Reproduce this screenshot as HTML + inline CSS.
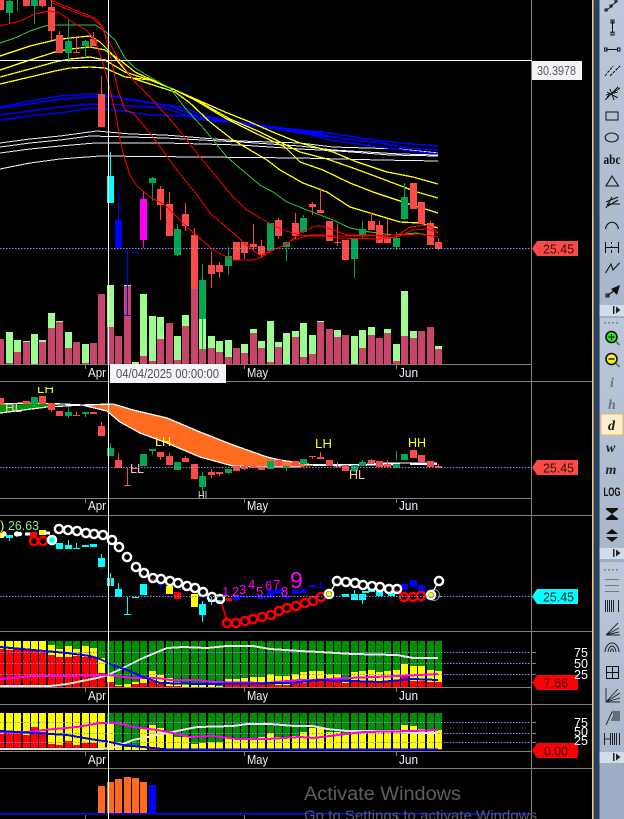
<!DOCTYPE html>
<html><head><meta charset="utf-8"><style>
html,body{margin:0;padding:0;background:#000;width:624px;height:819px;overflow:hidden}
svg{display:block;position:absolute;left:0;top:0}
text{font-family:"Liberation Sans",sans-serif}
.ax{fill:#eaf2ff;font-size:13px}
.tg{fill:#301010;font-size:13px}
.lb{fill:#fff;font-size:13px}
.ln{fill:none;shape-rendering:crispEdges}
.b{shape-rendering:crispEdges}
.ic{fill:none;stroke:#111;stroke-width:1;shape-rendering:crispEdges}
.c{fill:none;stroke-width:2.4}
</style></head><body>
<svg width="624" height="819" viewBox="0 0 624 819" xmlns="http://www.w3.org/2000/svg">
<defs><linearGradient id="tb" x1="0" y1="0" x2="0" y2="1"><stop offset="0" stop-color="#bcc8da"/><stop offset="1" stop-color="#a9b7cc"/></linearGradient></defs>
<rect width="624" height="819" fill="#000"/>

<!-- VOLUME -->
<path class="b" fill="#9cfc8c" d="M6 332h7V364h-7zM14 340h7V364h-7zM23 341h7V364h-7zM31 334h7V364h-7zM39 340h7V364h-7zM48 313h7V364h-7zM56 321h7V364h-7zM65 332h7V364h-7zM82 344h7V364h-7zM107 285h7V364h-7zM124 285h7V364h-7zM132 362h7V364h-7zM140 294h7V364h-7zM149 316h7V364h-7zM157 317h7V364h-7zM174 336h7V364h-7zM182 315h7V364h-7zM199 319h7V364h-7zM208 336h7V364h-7zM216 341h7V364h-7zM225 340h7V364h-7zM241 344h7V364h-7zM250 329h7V364h-7zM258 341h7V364h-7zM267 321h7V364h-7zM275 342h7V364h-7zM283 333h7V364h-7zM292 331h7V364h-7zM300 323h7V364h-7zM309 335h7V364h-7zM317 321h7V364h-7zM334 330h7V364h-7zM351 336h7V364h-7zM359 330h7V364h-7zM368 327h7V364h-7zM384 329h7V364h-7zM393 344h7V364h-7zM401 291h7V364h-7zM410 331h7V364h-7zM435 346h7V364h-7z"/>
<path class="b" fill="#c8456a" d="M-3 339h7V364h-7zM6 363h7V364h-7zM14 352h7V364h-7zM23 342h7V364h-7zM39 342h7V364h-7zM48 328h7V364h-7zM56 322h7V364h-7zM65 348h7V364h-7zM73 342h7V364h-7zM82 363h7V364h-7zM90 343h7V364h-7zM98 294h7V364h-7zM107 327h7V364h-7zM115 336h7V364h-7zM124 286h7V364h-7zM140 356h7V364h-7zM149 361h7V364h-7zM157 339h7V364h-7zM166 323h7V364h-7zM174 360h7V364h-7zM182 326h7V364h-7zM191 289h7V364h-7zM199 349h7V364h-7zM208 348h7V364h-7zM216 352h7V364h-7zM225 357h7V364h-7zM233 348h7V364h-7zM241 353h7V364h-7zM250 333h7V364h-7zM258 348h7V364h-7zM267 362h7V364h-7zM275 347h7V364h-7zM292 337h7V364h-7zM300 357h7V364h-7zM309 354h7V364h-7zM317 322h7V364h-7zM326 329h7V364h-7zM334 337h7V364h-7zM342 335h7V364h-7zM359 348h7V364h-7zM368 335h7V364h-7zM376 338h7V364h-7zM384 333h7V364h-7zM393 361h7V364h-7zM401 336h7V364h-7zM410 338h7V364h-7zM418 331h7V364h-7zM427 327h7V364h-7zM435 349h7V364h-7z"/>

<!-- WHITE MAS -->
<g class="ln" stroke="#eeeeff" stroke-width="1">
<path d="M0 143L30 139L60 136L97 131L130 134L165 135L240 141L300 143L333 147L367 148L400 149L438 153"/>
<path d="M0 147L30 143L60 140L90 136L130 137L165 138L240 142L300 146L333 150L367 152L400 154L438 155"/>
<path d="M0 153L30 149L60 146L95 143L165 143L240 145L300 149L338 151L390 155L438 156"/>
<path d="M0 169L30 163L60 159L100 156L300 158L380 160L438 161"/>
</g>
<!-- BLUE MAS -->
<g class="ln" stroke="#0000ff" stroke-width="1.5">
<path d="M0 107L30 101L60 96L90 94L110 95L130 100L170 106L200 117L240 124L300 130L323 132L367 139L400 143L438 146"/>
<path d="M0 108L30 104L60 99L93 97L110 96L140 101L180 107L210 117L250 125L300 131L340 138L380 143L410 148L438 150"/>
<path d="M0 115L30 111L60 107L90 104L110 104L130 106L165 108L185 115L240 122L300 132L330 140L380 147L410 151L438 154"/>
<path d="M0 120L30 116L60 113L90 108L115 110L150 115L185 116L205 120L240 123L300 133L340 138"/>
<path stroke-width="3" d="M245 124L300 131L323 134"/>
</g>
<!-- YELLOW MAS -->
<g class="ln" stroke="#ffff00" stroke-width="1.3">
<path d="M0 56L30 46L55 40L70 38L90 36L100 42L110 52L120 64L132 78L150 84L175 92L190 103L210 122L233 140L267 160L280 170L303 183L327 192L350 207L370 213L400 222L420 223L438 228"/>
<path d="M0 70L30 60L55 52L70 49L90 47L105 50L120 60L135 72L150 79L175 90L195 100L225 118L255 133L285 147L300 162L323 170L350 183L373 192L403 202L438 213"/>
<path d="M0 77L30 69L55 62L70 59L90 57L105 60L125 72L150 80L175 90L200 102L230 119L260 132L300 152L327 159L353 168L380 178L417 192L438 198"/>
<path d="M0 84L30 77L55 71L70 68L90 67L105 68L125 77L150 80L175 90L200 101L225 112L250 122L275 133L300 143L333 152L357 162L387 172L413 177L438 184"/>
</g>
<!-- GREEN MA -->
<path class="ln" stroke="#33c733" stroke-width="1" d="M0 43L15 38L30 31L45 26L52 25L95 25L105 31L115 40L125 58L135 68L155 80L170 88L185 108L205 130L227 157L242 170L260 185L273 192L287 202L307 210L333 220L350 228L370 232L393 235L417 233L438 237"/>

<!-- MAIN CANDLES wicks -->
<path class="b" fill="none" stroke="#00a651" d="M9.5 0V23M17.5 0V11M34.5 0V24M68.5 19V62M85.5 40V56M152.5 177V201M177.5 224V256M202.5 264V352M228.5 247V275M286.5 242V261M303.5 215V233M354.5 239V278M362.5 221V239M396.5 232V250M404.5 183V220"/>
<path class="b" fill="none" stroke="#ff4444" d="M42.5 0V7M51.5 0V40M59.5 31V35M76.5 36V52M93.5 32V39M101.5 76V94M160.5 186V220M169.5 192V204M185.5 203V231M194.5 228V235M211.5 251V288M219.5 262V278M244.5 242V259M253.5 224V250M261.5 240V258M278.5 218V239M295.5 213V239M312.5 202V215M320.5 188V213M337.5 224V246M345.5 240V260M371.5 213V221M379.5 221V225M387.5 219V243M430.5 221V245M438.5 238V250"/>
<path class="b" fill="none" stroke="#0000ff" d="M118.5 190V220M127.5 248V315M124 315.5H131"/>
<path class="b" fill="none" stroke="#00ffff" d="M110.5 152V176"/>
<path class="b" fill="none" stroke="#ff00ff" d="M143.5 192V248"/>
<path class="b" fill="none" stroke="#ff4444" d="M73 52.5H80"/>

<path class="b" fill="#00a651" d="M6 1h7v12h-7zM31 0h7v6h-7zM65 41h7v12h-7zM82 41h7v5h-7zM149 178h7v5h-7zM174 229h7v26h-7zM199 280h7v39h-7zM225 256h7v10h-7zM267 223h7v28h-7zM283 242h7v5h-7zM300 218h7v14h-7zM351 239h7v20h-7zM359 229h7v7h-7zM393 238h7v9h-7zM401 197h7v22h-7z"/>
<path class="b" fill="#fb4a47" d="M-3 0h7v10h-7zM23 0h7v6h-7zM39 0h7v6h-7zM48 7h7v24h-7zM56 35h7v18h-7zM90 39h7v7h-7zM98 94h7v33h-7zM157 189h7v16h-7zM166 204h7v32h-7zM182 214h7v12h-7zM191 235h7v54h-7zM208 265h7v9h-7zM216 265h7v7h-7zM233 242h7v18h-7zM241 242h7v11h-7zM250 244h7v3h-7zM258 246h7v9h-7zM275 220h7v16h-7zM292 223h7v13h-7zM309 204h7v3h-7zM317 210h7v3h-7zM326 221h7v20h-7zM334 242h7v1h-7zM342 240h7v20h-7zM368 221h7v9h-7zM376 225h7v18h-7zM384 237h7v6h-7zM410 183h7v26h-7zM418 202h7v22h-7zM427 223h7v22h-7zM435 242h7v7h-7z"/>
<path class="b" fill="#00ffff" d="M107 176h7v27h-7z"/>
<path class="b" fill="#0000ff" d="M115 220h7v28h-7zM132 252h7v1h-7z"/>
<path class="b" fill="#ff00ff" d="M140 199h7v41h-7z"/>

<!-- RED MAS -->
<g fill="none" stroke="#ff0000" stroke-width="1" shape-rendering="crispEdges">
<path d="M0 26L20 21L35 14L50 11L60 13L75 24L85 29L95 40L103 63L110 90L116 115L120 140L125 160L130 175L136 185L150 197L165 205L187 227L213 250L233 260L253 260L260 258L273 250L287 244L300 233L315 226L323 226L333 230L347 235L373 235L393 238L410 227L427 225L438 232"/>
<path d="M52 3L70 10L85 16L95 18L103 27L110 55L118 90L125 110L133 113L150 133L177 170L197 195L210 213L233 233L255 252L260 255L280 247L293 240L310 235L323 235L337 238L380 239L397 237L413 230L427 229L438 233"/>
<path d="M50 0L70 8L90 16L100 25L120 62L135 82L150 97L175 125L200 157L233 197L247 210L267 222L283 230L300 235L310 236L360 236L400 235L420 234L438 237"/>
</g>

<!-- PANE 2 CLOUDS -->
<path class="b" fill="#ff6c1f" d="M82 405L113 404L133 410L167 418L200 432L233 445L267 457L300 463L313 466L300 467L233 466L200 457L167 443L140 433L120 422L107 411Z"/>
<path class="b" fill="#009a00" d="M0 405L30 404L63 404L47 407L0 413Z"/>
<g class="ln" stroke="#fff" stroke-width="1.3">
<path d="M0 404L30 403L63 404L82 405L113 404L133 410L167 418L200 432L233 445L267 457L280 460L300 463L313 465L367 465L380 463L410 463L437 463"/>
<path d="M0 413L47 407L82 405L107 411L120 422L140 433L167 443L200 457L233 466L260 467L300 467"/>
<path stroke-width="2" d="M313 465H367M367 464.5H400M410 464H437"/>
</g>

<!-- PANE 2 CANDLES -->
<path class="b" fill="none" stroke="#00a651" d="M34.5 397V407M68.5 407V418M85.5 414V417M110.5 443V456M152.5 449V455M202.5 472V494M228.5 469V474M286.5 466V471M362.5 460V466M396.5 451V460M354.5 465V472"/>
<path class="b" fill="none" stroke="#fb4a47" d="M51.5 403V412M76.5 412V416M101.5 422V426M118.5 453V460M127.5 468V485M124 485.5H131M132 468.5H139M160.5 452V460M169.5 453V456M185.5 456V458M211.5 469V478M219.5 472V476M244.5 466V470M253.5 462V466M312.5 457V459M320.5 452V458M337.5 462V467M371.5 459V460M387.5 460V464M438.5 464V466"/>
<path class="b" fill="#00a651" d="M31 397h7v7h-7zM65 412h7v4h-7zM82 412h7v2h-7zM107 448h7v8h-7zM140 454h7v12h-7zM149 449h7v2h-7zM174 462h7v8h-7zM199 476h7v11h-7zM225 469h7v4h-7zM267 461h7v8h-7zM283 466h7v2h-7zM300 459h7v5h-7zM351 465h7v6h-7zM359 462h7v4h-7zM393 464h7v4h-7zM401 454h7v6h-7z"/>
<path class="b" fill="#fb4a47" d="M-3 398h7v7h-7zM23 401h7v3h-7zM39 396h7v8h-7zM48 403h7v7h-7zM56 411h7v5h-7zM73 415h7v1h-7zM90 412h7v2h-7zM98 426h7v10h-7zM115 460h7v8h-7zM157 452h7v5h-7zM166 456h7v9h-7zM182 458h7v4h-7zM191 464h7v15h-7zM208 472h7v3h-7zM216 472h7v2h-7zM233 466h7v5h-7zM241 466h7v3h-7zM250 466h7v2h-7zM258 467h7v3h-7zM275 460h7v6h-7zM292 461h7v5h-7zM309 456h7v1h-7zM317 457h7v2h-7zM326 460h7v6h-7zM334 466h7v1h-7zM342 465h7v6h-7zM368 460h7v3h-7zM376 461h7v6h-7zM384 464h7v3h-7zM410 450h7v8h-7zM418 455h7v7h-7zM427 461h7v6h-7zM435 466h7v2h-7z"/>
<rect class="b" x="108" y="405" width="1" height="11" fill="#2f8fd0"/>
<clipPath id="p2"><rect x="0" y="387" width="531" height="111"/></clipPath>
<g clip-path="url(#p2)" font-size="13">
<text x="37" y="393" fill="#ffff00" textLength="17" lengthAdjust="spacingAndGlyphs" style="font-size:13px">LH</text>
<text x="5" y="412" fill="#f0c8d0" textLength="17" lengthAdjust="spacingAndGlyphs" style="font-size:13px">HL</text>
<text x="155" y="446" fill="#ffff00" textLength="16" lengthAdjust="spacingAndGlyphs" style="font-size:13px">LH</text>
<text x="130" y="473" fill="#ffc0c8" textLength="14" lengthAdjust="spacingAndGlyphs" style="font-size:13px">LL</text>
<text x="198" y="500" fill="#f0c8d0" textLength="12" lengthAdjust="spacingAndGlyphs" style="font-size:13px">HL</text>
<text x="315" y="448" fill="#ffff00" textLength="17" lengthAdjust="spacingAndGlyphs" style="font-size:13px">LH</text>
<text x="349" y="479" fill="#f0c8d0" textLength="16" lengthAdjust="spacingAndGlyphs" style="font-size:13px">HL</text>
<text x="408" y="447" fill="#ffff00" textLength="18" lengthAdjust="spacingAndGlyphs" style="font-size:13px">HH</text>
</g>

<!-- PANE 3 -->
<path class="b" fill="none" stroke="#00ffff" d="M9.5 535V541M68.5 540V549M76.5 543V549M73 548.5H80M101.5 554V558M110.5 573V586M118.5 583V589M127.5 597V614M124 614.5H131M132 597.5H139M202.5 601V622M211.5 597V605M354.5 590V596M362.5 600V604"/>
<path class="b" fill="none" stroke="#0000ff" d="M160.5 582V588M253.5 592V596M286.5 596V600M320.5 582V587M404.5 581V584M190 598H194"/>
<path class="b" fill="#00ffff" d="M6 535h7v3h-7zM56 543h7v6h-7zM65 545h7v4h-7zM82 545h7v2h-7zM90 544h7v3h-7zM98 558h7v9h-7zM107 578h7v8h-7zM115 589h7v8h-7zM140 584h7v11h-7zM199 604h7v11h-7zM208 600h7v2h-7zM216 600h7v2h-7zM342 594h7v3h-7zM351 594h7v6h-7zM359 594h7v6h-7zM362 591h7v2h-7zM368 590h7v2h-7zM376 591h7v5h-7zM388 593h7v3h-7zM439 596h3v1h-3z"/>
<path class="b" fill="#0000ff" d="M157 582h7v3h-7zM182 588h7v2h-7zM233 596h7v4h-7zM241 596h7v2h-7zM250 596h7v1h-7zM258 596h7v3h-7zM267 590h7v8h-7zM275 589h7v5h-7zM283 596h7v2h-7zM292 590h7v4h-7zM300 589h7v4h-7zM309 585h7v2h-7zM317 587h7v1h-7zM401 584h7v6h-7zM410 580h7v7h-7zM418 585h7v7h-7zM149 579h7v1h-7z"/>
<path class="b" fill="#ffff00" d="M-3 533h7v5h-7zM39 530h7v5h-7zM166 586h7v8h-7zM191 594h7v13h-7z"/>
<path class="b" fill="#ff0000" d="M30 532h7v5h-7zM174 592h7v7h-7zM226 598h6v3h-6zM110 578h1v8h-1zM150 579h5v1h-5z"/>
<g class="c" stroke="#ff0000" fill="none">
<circle cx="34" cy="541" r="4.1"/><circle cx="43" cy="541" r="4.1"/>
<circle cx="227" cy="623" r="4.1"/><circle cx="236" cy="623" r="4.1"/><circle cx="245" cy="621" r="4.1"/><circle cx="253" cy="619" r="4.1"/><circle cx="262" cy="617" r="4.1"/><circle cx="271" cy="615" r="4.1"/><circle cx="279" cy="611" r="4.1"/><circle cx="287" cy="608" r="4.1"/><circle cx="296" cy="606" r="4.1"/><circle cx="305" cy="603" r="4.1"/><circle cx="313" cy="601" r="4.1"/><circle cx="321" cy="597" r="4.1"/>
<circle cx="404" cy="597" r="4.1"/><circle cx="413" cy="597" r="4.1"/><circle cx="421" cy="596" r="4.1"/>
<path stroke-width="1.5" d="M221 600L227 622M396 590L404 597"/>
</g>
<circle cx="52" cy="540" r="3.2" fill="#00ffff"/>
<circle cx="329" cy="594" r="2.5" fill="#ffff00"/><circle cx="431" cy="595" r="2.5" fill="#ffff00"/>
<circle cx="434" cy="595" r="5.5" fill="none" stroke="#7fd07f" stroke-width="0.8"/>
<g class="c" stroke="#fff" fill="none">
<circle cx="4" cy="534" r="1.5"/><circle cx="17" cy="534" r="1.5"/><circle cx="20" cy="534" r="1"/>
<circle cx="52" cy="540" r="4.1"/>
<path stroke-width="3" d="M14 534H18M25 534H30M44 533H50"/>
<circle cx="59" cy="529" r="4.1"/><circle cx="68" cy="530" r="4.1"/><circle cx="77" cy="531" r="4.1"/><circle cx="86" cy="533" r="4.1"/><circle cx="94" cy="534" r="4.1"/><circle cx="103" cy="535" r="4.1"/><circle cx="112" cy="540" r="4.1"/><circle cx="119" cy="547" r="4.1"/><circle cx="127" cy="557" r="4.1"/><circle cx="136" cy="567" r="4.1"/><circle cx="144" cy="573" r="4.1"/><circle cx="153" cy="578" r="4.1"/><circle cx="161" cy="579" r="4.1"/><circle cx="170" cy="581" r="4.1"/><circle cx="178" cy="583" r="4.1"/><circle cx="187" cy="586" r="4.1"/><circle cx="195" cy="588" r="4.1"/><circle cx="203" cy="592" r="4.1"/><circle cx="212" cy="597" r="4.1"/><circle cx="220" cy="599" r="4.1"/>
<circle cx="329" cy="594" r="4.1"/><circle cx="337" cy="581" r="4.1"/><circle cx="346" cy="582" r="4.1"/><circle cx="355" cy="583" r="4.1"/><circle cx="363" cy="585" r="4.1"/><circle cx="372" cy="586" r="4.1"/><circle cx="380" cy="587" r="4.1"/><circle cx="389" cy="589" r="4.1"/><circle cx="397" cy="589" r="4.1"/>
<circle cx="431" cy="595" r="4.1"/><circle cx="439" cy="581" r="4.1"/>
<path stroke-width="1.3" d="M331 591L335 584M433 592L437 584"/>
</g>
<text x="0" y="530" style="font-size:13px" fill="#ffff00">)</text>
<text x="8" y="530" style="font-size:13px" fill="#90ee80" textLength="31" lengthAdjust="spacingAndGlyphs">26.63</text>
<g fill="#ff00ff" style="font-size:13px">
<text x="222" y="596" style="font-size:13px">1</text><text x="232" y="596" style="font-size:13px">2</text><text x="239" y="594" style="font-size:13px">3</text><text x="248" y="589" style="font-size:13px">4</text><text x="256" y="596" style="font-size:13px">5</text><text x="265" y="590" style="font-size:13px">6</text><text x="273" y="589" style="font-size:13px">7</text><text x="281" y="596" style="font-size:13px">8</text>
<text x="290" y="588" style="font-size:23px">9</text>
</g>

<!-- PANE 4 -->
<path id="g4" class="b" fill="#008f00" d="M0 641h4V687H0zM6 641h7V687h-7zM14 641h7V687h-7zM23 641h7V687h-7zM31 641h7V687h-7zM39 641h7V687h-7zM48 641h7V687h-7zM56 641h7V687h-7zM65 641h7V687h-7zM73 641h7V687h-7zM82 641h7V687h-7zM90 641h7V687h-7zM98 641h7V687h-7zM107 641h7V687h-7zM115 641h7V687h-7zM124 641h7V687h-7zM132 641h7V687h-7zM140 641h7V687h-7zM149 641h7V687h-7zM157 641h7V687h-7zM166 641h7V687h-7zM174 641h7V687h-7zM182 641h7V687h-7zM191 641h7V687h-7zM199 641h7V687h-7zM208 641h7V687h-7zM216 641h7V687h-7zM225 641h7V687h-7zM233 641h7V687h-7zM241 641h7V687h-7zM250 641h7V687h-7zM258 641h7V687h-7zM267 641h7V687h-7zM275 641h7V687h-7zM283 641h7V687h-7zM292 641h7V687h-7zM300 641h7V687h-7zM309 641h7V687h-7zM317 641h7V687h-7zM326 641h7V687h-7zM334 641h7V687h-7zM342 641h7V687h-7zM351 641h7V687h-7zM359 641h7V687h-7zM368 641h7V687h-7zM376 641h7V687h-7zM384 641h7V687h-7zM393 641h7V687h-7zM401 641h7V687h-7zM410 641h7V687h-7zM418 641h7V687h-7zM427 641h7V687h-7zM435 641h7V687h-7z"/>
<path class="b" fill="#ffff00" d="M0 641h4V687H0zM6 641h7V687h-7zM14 641h7V687h-7zM23 641h7V687h-7zM31 641h7V687h-7zM39 641h7V687h-7zM48 645h7V687h-7zM56 649h7V687h-7zM65 646h7V687h-7zM73 649h7V687h-7zM82 646h7V687h-7zM90 648h7V687h-7zM98 658h7V687h-7zM107 675h7V687h-7zM115 685h7V687h-7zM124 684h7V687h-7zM132 682h7V687h-7zM140 679h7V687h-7zM149 671h7V687h-7zM157 675h7V687h-7zM166 678h7V687h-7zM174 682h7V687h-7zM182 683h7V687h-7zM191 684h7V687h-7zM199 685h7V687h-7zM208 685h7V687h-7zM216 686h7V687h-7zM225 679h7V687h-7zM233 679h7V687h-7zM241 678h7V687h-7zM250 677h7V687h-7zM258 677h7V687h-7zM267 674h7V687h-7zM275 676h7V687h-7zM283 676h7V687h-7zM292 674h7V687h-7zM300 672h7V687h-7zM309 671h7V687h-7zM317 671h7V687h-7zM326 674h7V687h-7zM334 674h7V687h-7zM342 682h7V687h-7zM351 672h7V687h-7zM359 671h7V687h-7zM368 670h7V687h-7zM376 672h7V687h-7zM384 671h7V687h-7zM393 670h7V687h-7zM401 664h7V687h-7zM410 666h7V687h-7zM418 666h7V687h-7zM427 670h7V687h-7zM435 671h7V687h-7z"/>
<path class="b" fill="#ff0000" d="M0 649h4V687H0zM6 650h7V687h-7zM14 649h7V687h-7zM23 649h7V687h-7zM31 651h7V687h-7zM39 652h7V687h-7zM48 655h7V687h-7zM56 657h7V687h-7zM65 657h7V687h-7zM73 656h7V687h-7zM82 657h7V687h-7zM90 657h7V687h-7zM98 673h7V687h-7zM107 682h7V687h-7zM115 686h7V687h-7zM132 684h7V687h-7zM140 683h7V687h-7zM149 681h7V687h-7zM157 684h7V687h-7zM166 686h7V687h-7zM174 686h7V687h-7zM225 683h7V687h-7zM233 683h7V687h-7zM241 684h7V687h-7zM250 684h7V687h-7zM258 683h7V687h-7zM267 684h7V687h-7zM275 685h7V687h-7zM283 685h7V687h-7zM292 683h7V687h-7zM300 683h7V687h-7zM309 681h7V687h-7zM317 681h7V687h-7zM326 681h7V687h-7zM334 681h7V687h-7zM342 683h7V687h-7zM351 681h7V687h-7zM359 681h7V687h-7zM368 681h7V687h-7zM376 681h7V687h-7zM384 681h7V687h-7zM393 681h7V687h-7zM401 675h7V687h-7zM410 681h7V687h-7zM418 681h7V687h-7zM427 682h7V687h-7zM435 682h7V687h-7z"/>
<path stroke="#8a8aff" stroke-width="1" stroke-dasharray="1.5 1.5" fill="none" class="b" d="M0 652.5H531M0 663.5H531M0 674.5H531"/>
<path stroke="#808080" class="b" fill="none" d="M531 652.5H536M531 663.5H536M531 674.5H536"/>
<g class="ln" stroke-width="2">
<path stroke="#e8e8e8" d="M0 686L50 686L67 684L97 678L108 675L123 668L143 658L167 648L183 647L207 648L227 646L253 646L270 649L300 651L320 652L353 654L397 655L413 658L438 658"/>
<path stroke="#ff00ff" d="M0 679L33 676L67 676L108 675L133 678L157 678L170 680L197 680L213 682L267 683L287 681L300 680L313 680L347 678L400 676L438 674"/>
<path stroke="#0000ff" d="M0 647L33 650L67 653L90 656L100 659L112 665L127 670L143 677L160 683L200 684L287 683L300 682L320 680L353 681L380 682L413 679L438 680"/>
</g>

<!-- PANE 5 -->
<use href="#g4" transform="translate(0,713) scale(1,0.8043) translate(0,-641)"/>
<path class="b" fill="#ffff00" d="M0 713h4V750H0zM6 713h7V750h-7zM14 713h7V750h-7zM23 713h7V750h-7zM31 713h7V750h-7zM39 713h7V750h-7zM48 713h7V750h-7zM56 713h7V750h-7zM65 713h7V750h-7zM73 713h7V750h-7zM82 713h7V750h-7zM90 713h7V750h-7zM98 713h7V750h-7zM107 724h7V750h-7zM115 742h7V750h-7zM124 747h7V750h-7zM132 747h7V750h-7zM140 728h7V750h-7zM149 725h7V750h-7zM157 728h7V750h-7zM166 732h7V750h-7zM174 737h7V750h-7zM182 737h7V750h-7zM191 744h7V750h-7zM199 743h7V750h-7zM208 742h7V750h-7zM216 742h7V750h-7zM225 738h7V750h-7zM233 738h7V750h-7zM241 738h7V750h-7zM250 738h7V750h-7zM258 737h7V750h-7zM267 733h7V750h-7zM275 737h7V750h-7zM283 737h7V750h-7zM292 736h7V750h-7zM300 732h7V750h-7zM309 728h7V750h-7zM317 727h7V750h-7zM326 732h7V750h-7zM334 732h7V750h-7zM342 733h7V750h-7zM351 731h7V750h-7zM359 733h7V750h-7zM368 732h7V750h-7zM376 732h7V750h-7zM384 732h7V750h-7zM393 730h7V750h-7zM401 725h7V750h-7zM410 726h7V750h-7zM418 729h7V750h-7zM427 730h7V750h-7zM435 730h7V750h-7z"/>
<path class="b" fill="#ff0000" d="M0 734h4V750H0zM6 733h7V750h-7zM14 733h7V750h-7zM23 735h7V750h-7zM31 727h7V750h-7zM39 732h7V750h-7zM48 744h7V750h-7zM56 745h7V750h-7zM65 741h7V750h-7zM73 745h7V750h-7zM82 743h7V750h-7zM90 743h7V750h-7zM98 749h7V750h-7zM149 749h7V750h-7zM157 749h7V750h-7zM435 749h7V750h-7z"/>
<path stroke="#8a8aff" stroke-width="1" stroke-dasharray="1.5 1.5" fill="none" class="b" d="M0 722.5H531M0 733.5H531M0 742.5H531"/>
<path stroke="#808080" class="b" fill="none" d="M531 722.5H536M531 733.5H536M531 742.5H536"/>
<g class="ln" stroke-width="2">
<path stroke="#e8e8e8" d="M0 749L100 749L113 748L133 740L167 733L197 727L233 726L247 724L270 724L295 726L313 726L327 729L347 731L397 731L413 733L438 733"/>
<path stroke="#ff00ff" d="M0 732L33 732L43 730L77 727L100 723L117 723L133 727L157 730L173 733L190 737L213 736L237 739L267 739L300 737L313 738L363 732L413 731L438 730"/>
<path stroke="#0000ff" d="M0 731L33 733L67 735L90 739L110 742L123 745L143 747L167 749.5L438 749.5"/>
</g>

<!-- PANE 6 -->
<path class="b" fill="#ff6a20" d="M98 786h7v27h-7zM107 782h7v31h-7zM115 779h7v34h-7zM124 777h7v36h-7zM132 778h7v35h-7zM140 782h7v31h-7z"/>
<rect class="b" x="149" y="785" width="7" height="28" fill="#0000ff"/>
<rect class="b" x="0" y="813" width="531" height="1.5" fill="#0a0aff"/>

<!-- DOTTED PRICE LINES -->
<path stroke="#8a8aff" stroke-width="1" stroke-dasharray="1.5 1.5" fill="none" class="b" d="M0 248.5H531M0 467.5H531M0 596.5H531"/>

<!-- SEPARATORS -->
<g class="b" fill="#808080">
<rect x="0" y="364" width="531" height="1"/><rect x="0" y="381" width="592" height="1"/>
<rect x="0" y="498" width="531" height="1"/><rect x="0" y="515" width="592" height="1"/>
<rect x="0" y="631" width="592" height="1"/><rect x="0" y="687" width="531" height="1"/>
<rect x="0" y="704" width="592" height="1"/><rect x="0" y="751" width="531" height="1"/>
<rect x="0" y="768" width="592" height="1"/><rect x="531" y="0" width="1" height="819"/>
<path d="M85 364h1v5h-1zM244 364h1v5h-1zM396 364h1v5h-1zM85 498h1v5h-1zM244 498h1v5h-1zM396 498h1v5h-1zM85 687h1v5h-1zM244 687h1v5h-1zM396 687h1v5h-1zM85 751h1v5h-1zM244 751h1v5h-1zM396 751h1v5h-1zM85 815h1v4h-1zM244 815h1v4h-1zM396 815h1v4h-1z"/>
</g>

<!-- DATE LABELS -->
<text class="ax" x="88" y="377" textLength="18" lengthAdjust="spacingAndGlyphs">Apr</text><text class="ax" x="247" y="377" textLength="21" lengthAdjust="spacingAndGlyphs">May</text><text class="ax" x="399" y="377" textLength="19" lengthAdjust="spacingAndGlyphs">Jun</text>
<text class="ax" x="88" y="510" textLength="18" lengthAdjust="spacingAndGlyphs">Apr</text><text class="ax" x="247" y="510" textLength="21" lengthAdjust="spacingAndGlyphs">May</text><text class="ax" x="399" y="510" textLength="19" lengthAdjust="spacingAndGlyphs">Jun</text>
<text class="ax" x="88" y="700" textLength="18" lengthAdjust="spacingAndGlyphs">Apr</text><text class="ax" x="247" y="700" textLength="21" lengthAdjust="spacingAndGlyphs">May</text><text class="ax" x="399" y="700" textLength="19" lengthAdjust="spacingAndGlyphs">Jun</text>
<text class="ax" x="88" y="764" textLength="18" lengthAdjust="spacingAndGlyphs">Apr</text><text class="ax" x="247" y="764" textLength="21" lengthAdjust="spacingAndGlyphs">May</text><text class="ax" x="399" y="764" textLength="19" lengthAdjust="spacingAndGlyphs">Jun</text>
<text class="ax" x="88" y="828" textLength="18" lengthAdjust="spacingAndGlyphs">Apr</text><text class="ax" x="247" y="828" textLength="21" lengthAdjust="spacingAndGlyphs">May</text>

<!-- CROSSHAIR -->
<rect class="b" x="108" y="0" width="1" height="819" fill="#fff"/>
<rect class="b" x="0" y="60" width="532" height="1" fill="#fff"/>

<!-- TOOLTIPS -->
<rect x="532" y="61" width="50" height="19" fill="#f4f4f4"/>
<text x="537" y="75" style="font-size:12.5px" fill="#555c70" textLength="39" lengthAdjust="spacingAndGlyphs">30.3978</text>
<rect x="110" y="364" width="116" height="19" fill="#f6f6f6"/>
<text x="116" y="378" style="font-size:12.5px" fill="#4a4f60" textLength="103" lengthAdjust="spacingAndGlyphs">04/04/2025 00:00:00</text>

<!-- TAGS -->
<path fill="#fb4a47" d="M532 248.5L537 241H578V256H537Z"/><text class="tg" x="543" y="253.5" textLength="31" lengthAdjust="spacingAndGlyphs">25.45</text>
<path fill="#fb4a47" d="M532 467.5L537 460H578V475H537Z"/><text class="tg" x="543" y="472.5" textLength="31" lengthAdjust="spacingAndGlyphs">25.45</text>
<path fill="#00ffff" d="M532 596.5L537 589H578V604H537Z"/><text class="tg" x="543" y="601.5" style="fill:#102030" textLength="31" lengthAdjust="spacingAndGlyphs">25.45</text>
<path fill="#ff0000" d="M532 682.5L537 675H578V690H537Z"/><text class="tg" x="544" y="687.5" textLength="24" lengthAdjust="spacingAndGlyphs">7.66</text>
<path fill="#ff0000" d="M532 750.5L537 743H578V758H537Z"/><text class="tg" x="544" y="755.5" textLength="24" lengthAdjust="spacingAndGlyphs">0.00</text>

<!-- RIGHT SCALE LABELS -->
<text class="lb" x="574" y="657" textLength="14" lengthAdjust="spacingAndGlyphs">75</text><text class="lb" x="574" y="668" textLength="14" lengthAdjust="spacingAndGlyphs">50</text><text class="lb" x="574" y="679" textLength="14" lengthAdjust="spacingAndGlyphs">25</text>
<text class="lb" x="574" y="727" textLength="14" lengthAdjust="spacingAndGlyphs">75</text><text class="lb" x="574" y="736" textLength="14" lengthAdjust="spacingAndGlyphs">50</text><text class="lb" x="574" y="745" textLength="14" lengthAdjust="spacingAndGlyphs">25</text>

<!-- ACTIVATE WINDOWS -->
<text x="304" y="800" fill="#5e5e5e" style="font-size:19px" textLength="157" lengthAdjust="spacingAndGlyphs">Activate Windows</text>
<text x="304" y="820" fill="#5e5e5e" style="font-size:14px" textLength="233" lengthAdjust="spacingAndGlyphs">Go to Settings to activate Windows</text>

<!-- TOOLBAR -->
<rect x="592" y="0" width="1.5" height="819" fill="#f4cf7a"/>
<rect x="593.5" y="0" width="6" height="819" fill="#2b3f61"/>
<rect x="599.5" y="0" width="24.5" height="819" fill="#9dadc5"/>
<rect x="599.5" y="0" width="24.5" height="305" fill="url(#tb)"/>
<rect x="599.5" y="305" width="24.5" height="11" fill="#d3dcea"/>
<rect x="600" y="318" width="24" height="230" rx="2" fill="url(#tb)"/>
<rect x="599.5" y="548" width="24.5" height="11" fill="#d3dcea"/>
<rect x="600" y="562" width="24" height="190" rx="2" fill="url(#tb)"/>
<rect x="599.5" y="752" width="24.5" height="11" fill="#d3dcea"/>
<rect x="601" y="414" width="22" height="21" fill="#ffeecb" stroke="#e6b765"/>
<path fill="#222" d="M616 306.5v7l4.5-3.5zM613 306h1.5v8h-1.5zM616 549.5v7l4.5-3.5zM613 549h1.5v8h-1.5zM616 753.5v7l4.5-3.5zM613 753h1.5v8h-1.5z"/>
<path stroke="#7a8698" stroke-dasharray="2 2" stroke-width="1.5" fill="none" class="b" d="M604 322.5H619M604 569.5H619"/>

<!-- toolbar icons set 1 -->
<g class="ic">
<path d="M606 11L617 1"/><rect x="605" y="9" width="2" height="2"/><rect x="610" y="5" width="2" height="2"/><rect x="615" y="0" width="2" height="2"/>
<path d="M612.5 21V33"/><rect x="611" y="20" width="3" height="3"/><rect x="611" y="32" width="3" height="3"/>
<path d="M606 49.5H618"/><rect x="604.5" y="48" width="2.5" height="3"/><rect x="617.5" y="48" width="2.5" height="3"/>
<path d="M605 76L613 66M610 76L620 66" stroke-dasharray="3 1"/>
<path d="M605 100L618 87M607 97L620 88M607 92L618 98M610 89L614 100M606 95L618 92"/>
<rect x="606" y="112" width="12" height="8" stroke-width="1.2"/>
</g>
<ellipse cx="611.7" cy="137.5" rx="6.5" ry="4.5" fill="none" stroke="#111" stroke-width="1.1"/>
<text x="603.5" y="164" style="font-family:'Liberation Serif',serif;font-weight:bold;font-size:13.5px" fill="#111" textLength="17" lengthAdjust="spacingAndGlyphs">abc</text>
<g fill="none" stroke="#111" stroke-width="1.1">
<path d="M612 176L618.5 186H606Z"/>
<path d="M606 202L618 197M607 204H620M606 208L612 197M608 206L618 200"/>
<path d="M605.5 229C607 220 617 220 618.5 229"/>
</g>
<path class="ic" d="M605.5 242V253M618.5 242V253M611.5 242V244M611.5 246V248M611.5 250V253M606 247.5H618"/>
<path d="M605.5 273L611 264L613 270L619.5 263" fill="none" stroke="#111" stroke-width="1.1"/>
<path d="M607 296L615 290" fill="none" stroke="#111" stroke-width="1.1"/><rect x="606" y="294" width="3" height="3" fill="none" stroke="#111"/>
<path d="M620 285L617 295L611 289Z" fill="#111"/>
<circle cx="611.5" cy="337" r="5.5" fill="#22ee22" stroke="#111" stroke-width="1.6"/>
<path d="M608.5 337H614.5M611.5 334V340" stroke="#111" stroke-width="1.2" fill="none"/>
<path d="M616 341.5L619.5 345" stroke="#666" stroke-width="1.6" fill="none"/>
<circle cx="611.5" cy="359" r="5.5" fill="#f4ee22" stroke="#111" stroke-width="1.6"/>
<path d="M608.5 359H614.5" stroke="#111" stroke-width="1.4" fill="none"/>
<path d="M616 363.5L619.5 367" stroke="#666" stroke-width="1.6" fill="none"/>
<g>
<text x="610" y="387" fill="#6b7280" style="font-family:'Liberation Serif',serif;font-weight:bold;font-style:italic;font-size:14px">i</text>
<text x="608" y="409" fill="#6b7280" style="font-family:'Liberation Serif',serif;font-weight:bold;font-style:italic;font-size:14px">h</text>
<text x="608" y="430" fill="#111" style="font-family:'Liberation Serif',serif;font-weight:bold;font-style:italic;font-size:14px">d</text>
<text x="606" y="452" fill="#222" style="font-family:'Liberation Serif',serif;font-weight:bold;font-style:italic;font-size:14px">w</text>
<text x="605.5" y="474" fill="#222" style="font-family:'Liberation Serif',serif;font-weight:bold;font-style:italic;font-size:14px">m</text>
</g>
<text x="603.5" y="496" style="font-family:'Liberation Sans',sans-serif;font-weight:bold;font-size:12px" fill="#111" textLength="17" lengthAdjust="spacingAndGlyphs">LOG</text>
<path fill="#111" d="M606 508H618V509.5L612 514L606 509.5ZM606 520H618V518.5L612 514L606 518.5Z"/>
<path fill="#111" d="M612 529L618 534H606ZM612 542L618 537H606Z"/>
<g class="b" stroke="#777" fill="none"><path d="M605 579.5H619M605 585.5H619M605 591.5H619"/></g>
<path class="b" fill="none" stroke="#222" d="M605.5 600V612M607.5 600V612M609.5 600V612M611.5 600V612M613.5 600V612M618.5 600V612"/>
<path d="M606 635L618 623M606 635L619 628M606 635H620M606 635L619 632" fill="none" stroke="#222" stroke-width="0.9"/>
<g fill="none" stroke="#222" stroke-width="1"><path d="M605 652C606 640 618 640 619 652M608 652C609 644 615 644 616 652M610.5 652C611 648 613 648 613.5 652"/></g>
<path class="ic" d="M606.5 666.5H618.5V678.5H606.5ZM606.5 672.5H618.5M612.5 666.5V678.5"/>
<path d="M606 702V688M606 702H620M606 702L618 689M606 702L620 693M606 702L620 698" fill="none" stroke="#222" stroke-width="0.9"/>
<path d="M606 725L612 712H620M613 714H620M613 716H620M612 718H620M611 720H620" fill="none" stroke="#222" stroke-width="0.9"/>
<path class="b" fill="none" stroke="#222" d="M604.5 733V745M610.5 733V745M604.5 739H610.5M612.5 733V745M614.5 733V745M616.5 733V745M619.5 733V745"/>
</svg>
</body></html>
